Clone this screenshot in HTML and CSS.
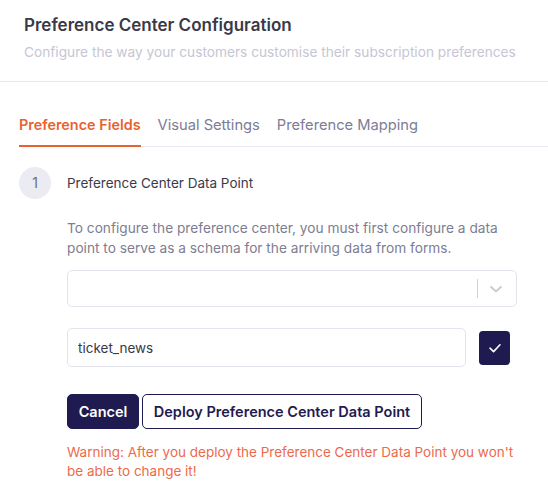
FILE: index.html
```html
<!DOCTYPE html>
<html>
<head>
    <title>Preference Center Configuration</title>
    <link rel="stylesheet" href="styles.css">
</head>
<body>
    <div class="header">
        <h1>Preference Center Configuration</h1>
        <p class="subtitle">Configure the way your customers customise their subscription preferences</p>
    </div>

    <div class="tabs">
        <span class="tab active">Preference Fields</span>
        <span class="tab">Visual Settings</span>
        <span class="tab">Preference Mapping</span>
    </div>

    <div class="step">
        <div class="step-num">1</div>
        <div class="step-title">Preference Center Data Point</div>
    </div>

    <div class="step-body">
        <p class="intro">To configure the preference center, you must first configure a data point to serve as a schema for the arriving data from forms.</p>

        <div class="select">
            <div class="select-value"></div>
            <span class="select-sep"></span>
            <svg class="select-arrow" width="20" height="20" viewBox="0 0 20 20">
                <path d="M4.5 7.5 L10 12.5 L15.5 7.5" fill="none" stroke="#cccccc" stroke-width="2"/>
            </svg>
        </div>

        <div class="name-row">
            <input class="name-input" type="text" value="ticket_news">
            <button class="check-btn">
                <svg width="14" height="14" viewBox="0 0 14 14">
                    <path d="M2 7.2 L5.6 10.6 L12 3.8" fill="none" stroke="#ffffff" stroke-width="1.6" stroke-linecap="round" stroke-linejoin="round"/>
                </svg>
            </button>
        </div>

        <div class="actions">
            <button class="btn btn-dark">Cancel</button>
            <button class="btn btn-outline">Deploy Preference Center Data Point</button>
        </div>

        <p class="warning">Warning: After you deploy the Preference Center Data Point you won't be able to change it!</p>
    </div>
</body>
</html>
```

FILE: styles.css
```css
body { margin: 0; font-family: Inter, "Open Sans", sans-serif; background: #fff; color: #393949; }

.header { padding: 13px 24px 18px; border-bottom: 1px solid #e6e6ef; }
.header h1 { margin: 0; font-size: 17px; font-weight: 600; line-height: 24px; color: #393949; }
.subtitle { margin: 4px 0 0; font-size: 13.7px; line-height: 22px; color: #c6c6d4; }

.tabs { display: flex; gap: 17px; margin: 29px 0 0 19px; border-bottom: 1px solid #e8e8f0; }
.tab { font-size: 14.7px; font-weight: 400; line-height: 20px; padding: 4px 0 11px; color: #7c7c96; }
.tab.active { color: #e8622f; font-size: 14.4px; font-weight: 600; border-bottom: 2px solid #e8622f; margin-bottom: -1px; padding-bottom: 10px; }

.step { display: flex; align-items: center; gap: 16px; margin: 20px 0 0 19px; }
.step-num { width: 32px; height: 32px; border-radius: 50%; background: #ebebf2; color: #6e6e80; font-size: 14px; line-height: 32px; text-align: center; }
.step-title { font-size: 13.5px; color: #3a3a4a; }

.step-body { padding-left: 67px; padding-right: 31px; }
.intro { margin: 19px 0 0; font-size: 13.7px; line-height: 20px; color: #7d7d92; }

.select { display: flex; align-items: center; height: 35px; margin-top: 12px; border: 1px solid #e4e4ee; border-radius: 5px; }
.select-value { flex: 1; }
.select-sep { width: 1px; height: 19px; background: #d2d2d2; }
.select-arrow { margin: 0 10px 0 8px; }

.name-row { display: flex; align-items: center; gap: 13px; margin-top: 21px; }
.name-input { width: 399px; height: 39px; box-sizing: border-box; border: 1px solid #e4e4ee; border-radius: 5px; padding: 0 10px; font-family: inherit; font-size: 13.5px; color: #393949; outline: none; }
.check-btn { width: 31px; height: 34px; border: none; border-radius: 4px; background: #1f1a50; display: flex; align-items: center; justify-content: center; padding: 0; }

.actions { display: flex; gap: 3px; margin-top: 27px; }
.btn { height: 35px; border-radius: 5px; font-family: inherit; font-size: 14.5px; font-weight: 600; padding: 0 6px; cursor: pointer; }
.btn-dark { background: #1f1a50; color: #fff; border: 1px solid #1f1a50; width: 72px; }
.btn-outline { background: #fff; color: #1f1a50; border: 1px solid #1f1a50; width: 280px; }

.warning { margin: 14px 0 0; font-size: 13.5px; line-height: 19px; color: #ec6a4c; }
```
